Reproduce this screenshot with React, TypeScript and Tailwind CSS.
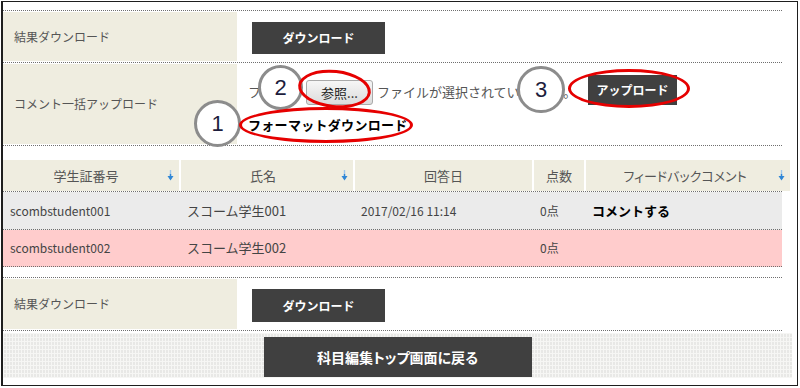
const dotted = 'border-dotted border-[#6f6f6f]';

function SortArrow() {
  return (
    <svg width="7" height="11" viewBox="0 0 7 11" className="absolute right-[5px] top-[10px]">
      <line x1="3.5" y1="0" x2="3.5" y2="9" stroke="#9cc6ec" strokeWidth="1.4" />
      <line x1="3.5" y1="4" x2="3.5" y2="9" stroke="#2f86d6" strokeWidth="1.4" />
      <path d="M0.5 6 L3.5 10.5 L6.5 6 Z" fill="#2f86d6" />
    </svg>
  );
}

function DarkButton({ label, className }: { label: string; className: string }) {
  return (
    <div className={`bg-[#404040] text-white font-bold flex items-center justify-center ${className}`}>
      {label}
    </div>
  );
}

function Circle({ n, className }: { n: string; className: string }) {
  return (
    <div
      className={`absolute rounded-full border-[3px] border-[#8c8c8c] bg-white flex items-center justify-center text-[22px] text-[#1d1d3d] font-['Liberation_Sans',sans-serif] ${className}`}
    >
      {n}
    </div>
  );
}

const students = [
  { id: 'scombstudent001', name: 'スコーム学生001', date: '2017/02/16 11:14', score: '0点', comment: 'コメントする', bg: 'bg-[#ebebeb]', h: 'h-[38px]' },
  { id: 'scombstudent002', name: 'スコーム学生002', date: '', score: '0点', comment: '', bg: 'bg-[#ffcccc]', h: 'h-[37px]' },
];

export default function App() {
  return (
    <div className="relative w-[800px] h-[388px] bg-white overflow-hidden font-['Noto_Sans_CJK_JP',sans-serif] text-[#444]">
      <div className="ml-px mt-px w-[797px] h-[385px] border-l-2 border-t border-r border-b border-[#1e1e1e] pt-[8px]">
        {/* form rows */}
        <div className={`w-[779px] border-t ${dotted}`}>
          <div className={`flex h-[52px] py-px border-b ${dotted}`}>
            <div className="w-[234px] bg-[#efede0] pl-[11px] flex items-center text-[12px] text-[#555]">結果ダウンロード</div>
            <div className="flex-1 pl-[15px] flex items-center">
              <DarkButton label="ダウンロード" className="w-[133px] h-[32px] mt-[3px] text-[12px]" />
            </div>
          </div>
          <div className={`flex h-[83px] py-px border-b ${dotted}`}>
            <div className="w-[234px] bg-[#efede0] pl-[11px] flex items-center text-[12px] text-[#555]">コメント一括アップロード</div>
            <div className="flex-1 pl-[11px] pt-[12px] flex flex-col">
              <div className="flex items-end h-[30px] text-[13px] text-[#555]">
                <span className="w-[58px] mb-[5px] whitespace-nowrap">ファイル</span>
                <div className="w-[67px] h-[25px] mb-px rounded-[3px] border border-[#a9a9a9] bg-[linear-gradient(#f6f6f6,#dcdcdc)] flex items-center justify-center text-[13px] text-[#222]">
                  参照...
                </div>
                <span className="ml-[4px] w-[197px] mb-[5px] whitespace-nowrap">
                  ファイルが選択されていません<span className="ml-[5px]">。</span>
                </span>
                <DarkButton label="アップロード" className="ml-[14px] w-[89px] h-[30px] mb-px text-[12px]" />
              </div>
              <div className="mt-[11px] text-[13px] font-bold text-black leading-[16px] tracking-[0.3px]">フォーマットダウンロード</div>
            </div>
          </div>
        </div>

        {/* results table */}
        <div className="mt-[14px]">
          <div className="grid grid-cols-[176px_174px_179px_52px_1fr] w-[787px] h-[31px] bg-[#efede0] text-[13px] text-[#555] [font-feature-settings:'palt']">
            <div className="relative flex items-center justify-center pr-[10px]">学生証番号<SortArrow /></div>
            <div className="relative flex items-center justify-center pr-[8px] border-l-2 border-white">氏名<SortArrow /></div>
            <div className="flex items-center justify-center border-l-2 border-white">回答日</div>
            <div className="flex items-center justify-center border-l-2 border-white">点数</div>
            <div className="relative flex items-center justify-center pr-[6px] border-l-2 border-white">フィードバックコメント<SortArrow /></div>
          </div>
          <div className={`w-[779px] border-t ${dotted}`}>
            {students.map((s) => (
              <div key={s.id} className={`grid grid-cols-[176px_174px_179px_52px_1fr] items-center text-[12px] border-b ${dotted} ${s.bg} ${s.h}`}>
                <div className="pl-[7px]">{s.id}</div>
                <div className="pl-[8px] text-[13px]">{s.name}</div>
                <div className="pl-[8px]">{s.date}</div>
                <div className="pl-[8px]">{s.score}</div>
                <div className="pl-[8px] font-bold text-[13px] text-black">{s.comment}</div>
              </div>
            ))}
          </div>
        </div>

        {/* bottom download row */}
        <div className={`mt-[10px] w-[779px] border-t border-b ${dotted}`}>
          <div className="flex h-[52px] py-px">
            <div className="w-[234px] bg-[#efede0] pl-[11px] flex items-center text-[12px] text-[#555]">結果ダウンロード</div>
            <div className="flex-1 pl-[15px] flex items-center">
              <DarkButton label="ダウンロード" className="w-[133px] h-[33px] mt-[3px] text-[12px]" />
            </div>
          </div>
        </div>

        {/* back nav */}
        <div className="mt-[2px] w-[789px] h-[45px] pt-[4px] pb-px flex justify-center bg-[#e8e8e6] [background-image:linear-gradient(90deg,#f6f6f4_1px,transparent_1px),linear-gradient(#f6f6f4_1px,transparent_1px)] [background-size:3px_4px]">
          <DarkButton label="科目編集トップ画面に戻る" className="w-[268px] h-[40px] text-[14px] [font-feature-settings:'palt']" />
        </div>
      </div>

      {/* annotations */}
      <Circle n="1" className="left-[194px] top-[100px] w-[47px] h-[47px]" />
      <Circle n="2" className="left-[258px] top-[65px] w-[45px] h-[45px]" />
      <Circle n="3" className="left-[517px] top-[66px] w-[48px] h-[47px]" />
      <div className="absolute left-[239px] top-[107px] w-[174px] h-[36px] rounded-[50%] border-[3px] border-[#e60000]" />
      <div className="absolute left-[298px] top-[70px] w-[73px] h-[38px] rounded-[50%] border-[3px] border-[#e60000] rotate-[6deg]" />
      <div className="absolute left-[568px] top-[69px] w-[122px] h-[39px] rounded-[50%] border-[3px] border-[#e60000]" />
    </div>
  );
}
